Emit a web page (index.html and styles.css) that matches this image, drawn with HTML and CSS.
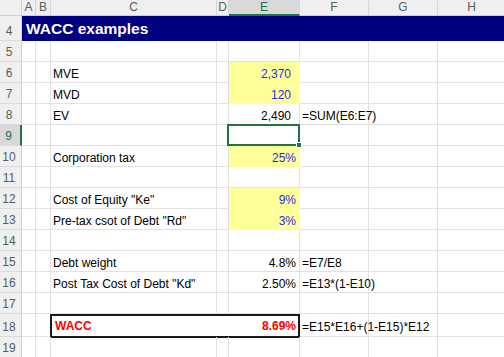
FILE: index.html
```html
<!DOCTYPE html>
<html>
<head>
<meta charset="utf-8">
<link rel="stylesheet" href="styles.css">
</head>
<body>
<div class="sheet">
  <div class="corner"></div>
  <div class="ch">A</div><div class="ch">B</div><div class="ch">C</div><div class="ch">D</div>
  <div class="ch ch-sel">E</div><div class="ch">F</div><div class="ch">G</div><div class="ch">H</div>

  <div class="rh">4</div>
  <div class="title">WACC examples</div>

  <div class="rh">5</div>
  <div class="c"></div><div class="c"></div><div class="c"></div><div class="c"></div><div class="c"></div><div class="c"></div><div class="c"></div><div class="c"></div>

  <div class="rh">6</div>
  <div class="c"></div><div class="c"></div><div class="c lbl">MVE</div><div class="c"></div><div class="c num input paren">2,370</div><div class="c"></div><div class="c"></div><div class="c"></div>

  <div class="rh">7</div>
  <div class="c"></div><div class="c"></div><div class="c lbl">MVD</div><div class="c"></div><div class="c num input paren">120</div><div class="c"></div><div class="c"></div><div class="c"></div>

  <div class="rh">8</div>
  <div class="c"></div><div class="c"></div><div class="c lbl">EV</div><div class="c"></div><div class="c num paren">2,490</div><div class="c lbl">=SUM(E6:E7)</div><div class="c"></div><div class="c"></div>

  <div class="rh rh-sel">9</div>
  <div class="c"></div><div class="c"></div><div class="c"></div><div class="c"></div><div class="c sel"></div><div class="c"></div><div class="c"></div><div class="c"></div>

  <div class="rh">10</div>
  <div class="c"></div><div class="c"></div><div class="c lbl">Corporation tax</div><div class="c"></div><div class="c num input">25%</div><div class="c"></div><div class="c"></div><div class="c"></div>

  <div class="rh">11</div>
  <div class="c"></div><div class="c"></div><div class="c"></div><div class="c"></div><div class="c"></div><div class="c"></div><div class="c"></div><div class="c"></div>

  <div class="rh">12</div>
  <div class="c"></div><div class="c"></div><div class="c lbl">Cost of Equity "Ke"</div><div class="c"></div><div class="c num input">9%</div><div class="c"></div><div class="c"></div><div class="c"></div>

  <div class="rh">13</div>
  <div class="c"></div><div class="c"></div><div class="c lbl">Pre-tax csot of Debt "Rd"</div><div class="c"></div><div class="c num input">3%</div><div class="c"></div><div class="c"></div><div class="c"></div>

  <div class="rh">14</div>
  <div class="c"></div><div class="c"></div><div class="c"></div><div class="c"></div><div class="c"></div><div class="c"></div><div class="c"></div><div class="c"></div>

  <div class="rh">15</div>
  <div class="c"></div><div class="c"></div><div class="c lbl">Debt weight</div><div class="c"></div><div class="c num">4.8%</div><div class="c lbl">=E7/E8</div><div class="c"></div><div class="c"></div>

  <div class="rh">16</div>
  <div class="c"></div><div class="c"></div><div class="c lbl">Post Tax Cost of Debt "Kd"</div><div class="c"></div><div class="c num">2.50%</div><div class="c lbl">=E13*(1-E10)</div><div class="c"></div><div class="c"></div>

  <div class="rh">17</div>
  <div class="c"></div><div class="c"></div><div class="c"></div><div class="c"></div><div class="c"></div><div class="c"></div><div class="c"></div><div class="c"></div>

  <div class="rh">18</div>
  <div class="c"></div><div class="c"></div>
  <div class="wacc"><span class="wacc-lbl">WACC</span><span class="wacc-val">8.69%</span></div>
  <div class="c lbl f18">=E15*E16+(1-E15)*E12</div><div class="c"></div><div class="c"></div>

  <div class="rh">19</div>
  <div class="c"></div><div class="c"></div><div class="c"></div><div class="c"></div><div class="c"></div><div class="c"></div><div class="c"></div><div class="c"></div>
</div>
</body>
</html>
```

FILE: styles.css
```css
html, body {
  margin: 0;
  padding: 0;
  background: #ffffff;
  overflow: hidden;
}

.sheet {
  display: grid;
  grid-template-columns: 22px 14px 15px 166px 12px 71px 69px 69px 68px;
  grid-template-rows: 16px 25px repeat(13, 21px) 23px 21px;
  width: 506px;
  font-family: "Liberation Sans", Arial, sans-serif;
  font-size: 12px;
  color: #000000;
}

.sheet > div {
  box-sizing: border-box;
  min-width: 0;
  white-space: nowrap;
}

.corner {
  background: #efefef;
  border-right: 1px solid #cfcfcf;
  border-bottom: 1px solid #cfcfcf;
}

.ch {
  background: #efefef;
  color: #5c5c5c;
  font-size: 12px;
  line-height: 14px;
  text-align: center;
  border-right: 1px solid #d6d6d6;
  border-bottom: 1px solid #cfcfcf;
}

.ch-sel {
  background: #d9d9d9;
  color: #217346;
  border-bottom: 2px solid #217346;
}

.rh {
  background: #efefef;
  color: #5c5c5c;
  font-size: 12px;
  text-align: center;
  padding-right: 3px;
  border-right: 1px solid #cfcfcf;
  border-bottom: 1px solid #dcdcdc;
  display: flex;
  align-items: flex-end;
  justify-content: center;
  padding-bottom: 2px;
  line-height: 14px;
}

.rh-sel {
  background: #d9d9d9;
  color: #217346;
  border-right: 2px solid #217346;
}

.title {
  grid-column: 2 / -1;
  background: #000080;
  color: #ffffff;
  font-weight: bold;
  font-size: 15.5px;
  line-height: 18px;
  padding: 4px 0 0 4px;
}

.c {
  border-right: 1px solid #e1e1e1;
  border-bottom: 1px solid #e1e1e1;
  display: flex;
  align-items: flex-end;
  line-height: 14px;
  padding-bottom: 1px;
}

.lbl {
  padding-left: 2px;
  overflow: visible;
}

.sheet > .lbl:nth-child(9n+4) {
  padding-left: 3px;
}

.num {
  justify-content: flex-end;
  padding-right: 3px;
}

.num.paren {
  padding-right: 8px;
}

.input {
  background: #ffff99;
  border-color: #ffff99;
  color: #2b2bef;
}

.sel {
  position: relative;
}

.sel::after {
  content: "";
  position: absolute;
  top: -1px;
  right: -1px;
  bottom: -1px;
  left: -2px;
  border: 2px solid #217346;
}

.sel::before {
  content: "";
  position: absolute;
  right: -3px;
  bottom: -3px;
  width: 4px;
  height: 4px;
  background: #217346;
  border: 1px solid #ffffff;
  z-index: 2;
}

.wacc {
  grid-column: 4 / 7;
  border: 2px solid #1a1a1a;
  margin: 0 0 -1px -1px;
  display: flex;
  align-items: flex-end;
  justify-content: space-between;
  padding: 0 2px 3px 3px;
  line-height: 14px;
  font-weight: bold;
  color: #ff0000;
}

.f18 {
  padding-bottom: 2px;
}
```
